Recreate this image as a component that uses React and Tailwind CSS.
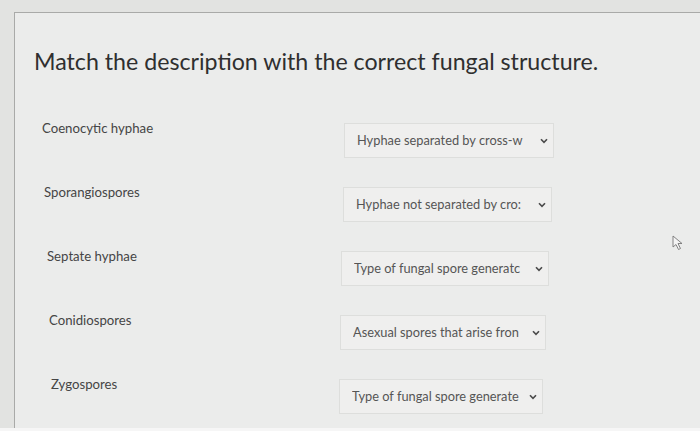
import React from "react";

const rows = [
  { label: "Coenocytic hyphae", value: "Hyphae separated by cross-w", lpl: "pl-[27px]", dml: "ml-[329px]", w: "w-[210px]" },
  { label: "Sporangiospores", value: "Hyphae not separated by cro:", lpl: "pl-[29px]", dml: "ml-[328px]", w: "w-[209px]" },
  { label: "Septate hyphae", value: "Type of fungal spore generatc", lpl: "pl-[32px]", dml: "ml-[326px]", w: "w-[208px]" },
  { label: "Conidiospores", value: "Asexual spores that arise fron", lpl: "pl-[34px]", dml: "ml-[325px]", w: "w-[206px]" },
  { label: "Zygospores", value: "Type of fungal spore generate", lpl: "pl-[36px]", dml: "ml-[324px]", w: "w-[204px]" },
];

function Chevron() {
  return (
    <svg width="8" height="6" viewBox="0 0 8 6" className="shrink-0 ml-[7px]">
      <path d="M1 1.2 L4 4.4 L7 1.2" fill="none" stroke="#4a4a4a" strokeWidth="1.6" />
    </svg>
  );
}

export default function App() {
  return (
    <div
      className="relative w-[700px] h-[431px] overflow-hidden bg-[#e2e3e1]"
      style={{ fontFamily: "Lato, 'Open Sans', sans-serif" }}
    >
      <div className="mt-[12px] ml-[14px] h-[416px] border-t border-l border-[#a9aaa8] bg-[#ebeceb]">
        <div className="pt-[33px] pl-[19px] text-[23.2px] leading-[30px] text-[#2f2f2f]">
          Match the description with the correct fungal structure.
        </div>
        <div className="mt-[43px] flex flex-col">
          {rows.map((r, i) => (
            <div key={i} className="relative h-[64px]">
              <div className={`${r.lpl} text-[13.2px] leading-[18px] text-[#454545]`}>{r.label}</div>
              <div
                className={`${r.dml} ${r.w} mt-[-14px] h-[35px] flex items-center pl-[12px] pr-[5px] border border-[#dddedc] bg-[#efefee]`}
              >
                <span className="flex-1 min-w-0 text-[12.8px] text-[#555] whitespace-nowrap overflow-hidden">{r.value}</span>
                <Chevron />
              </div>
            </div>
          ))}
        </div>
      </div>
      <div className="absolute left-0 bottom-0 w-[700px] h-[3px] bg-[#f6f6f6]" />
      <svg className="absolute left-[672px] top-[235px]" width="12" height="16" viewBox="0 0 12 16">
        <path d="M1 1 L1 12 L4 9.5 L6.5 14.5 L8.5 13.5 L6 8.5 L10 8.5 Z" fill="#f4f4f4" stroke="#777" strokeWidth="0.9" />
      </svg>
    </div>
  );
}
